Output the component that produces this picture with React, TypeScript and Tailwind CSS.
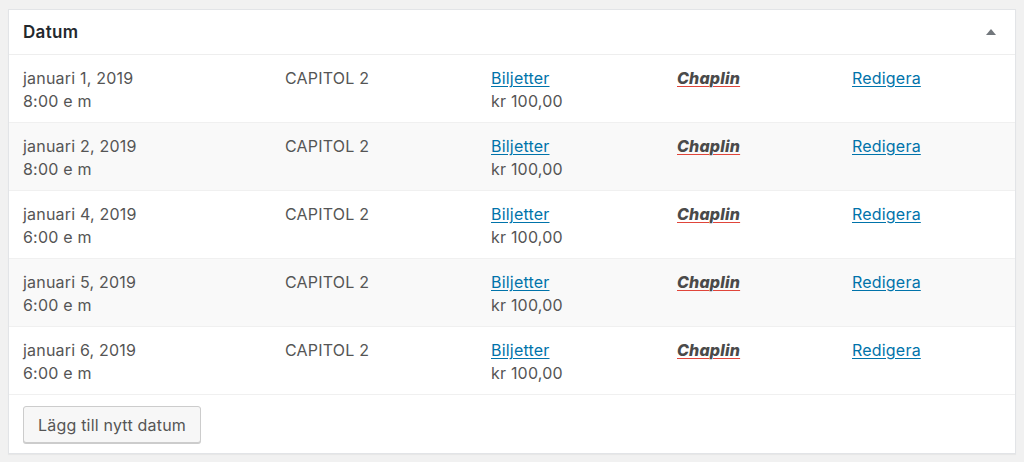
import React from "react";

const rows = [
  { d: "januari 1, 2019", t: "8:00 e m" },
  { d: "januari 2, 2019", t: "8:00 e m" },
  { d: "januari 4, 2019", t: "6:00 e m" },
  { d: "januari 5, 2019", t: "6:00 e m" },
  { d: "januari 6, 2019", t: "6:00 e m" },
];

export default function App() {
  return (
    <div
      className="w-[1024px] h-[462px] bg-[#f1f1f1] pt-[9px] px-[8px]"
      style={{ fontFamily: "Inter, 'Noto Sans', sans-serif" }}
    >
      <div className="bg-white border border-[#e2e4e7] shadow-[0_1px_1px_rgba(0,0,0,0.04)]">
        <div className="h-[45px] flex items-center justify-between pl-[14px] pr-[16px] border-b border-[#eeeeee]">
          <span className="text-[17px] font-semibold tracking-[0.3px] text-[#23282d] mt-[2px]">Datum</span>
          <svg width="12" height="8" viewBox="0 0 12 8" className="mr-[2px]">
            <path d="M6 1 L11 7 L1 7 Z" fill="#72777c" />
          </svg>
        </div>
        {rows.map((r, i) => (
          <div
            key={i}
            className={`h-[68px] flex pt-[12px] pl-[14px] text-[16px] tracking-[0.2px] leading-[23px] text-[#555555] border-b border-[#f0f0f0] ${
              i % 2 === 1 ? "bg-[#f9f9f9]" : "bg-white"
            }`}
          >
            <div className="w-[262px]">
              <div>{r.d}</div>
              <div>{r.t}</div>
            </div>
            <div className="w-[206px]">CAPITOL 2</div>
            <div className="w-[186px]">
              <div>
                <a href="#" className="text-[#0073aa] underline underline-offset-[2px]">Biljetter</a>
              </div>
              <div>kr 100,00</div>
            </div>
            <div className="w-[175px]">
              <span
                className="font-extrabold italic text-[#4a4a4a] underline decoration-[#e0453a] decoration-1 underline-offset-[2px]"
              >
                Chaplin
              </span>
            </div>
            <div>
              <a href="#" className="text-[#0073aa] underline underline-offset-[2px]">Redigera</a>
            </div>
          </div>
        ))}
        <div className="h-[58px] flex items-start pt-[11px] pl-[14px]">
          <button className="h-[37px] px-[14px] bg-[#f7f7f7] border border-[#cccccc] rounded-[3px] shadow-[0_1px_0_#cccccc] text-[16px] tracking-[0.2px] text-[#555555]">
            Lägg till nytt datum
          </button>
        </div>
      </div>
    </div>
  );
}
